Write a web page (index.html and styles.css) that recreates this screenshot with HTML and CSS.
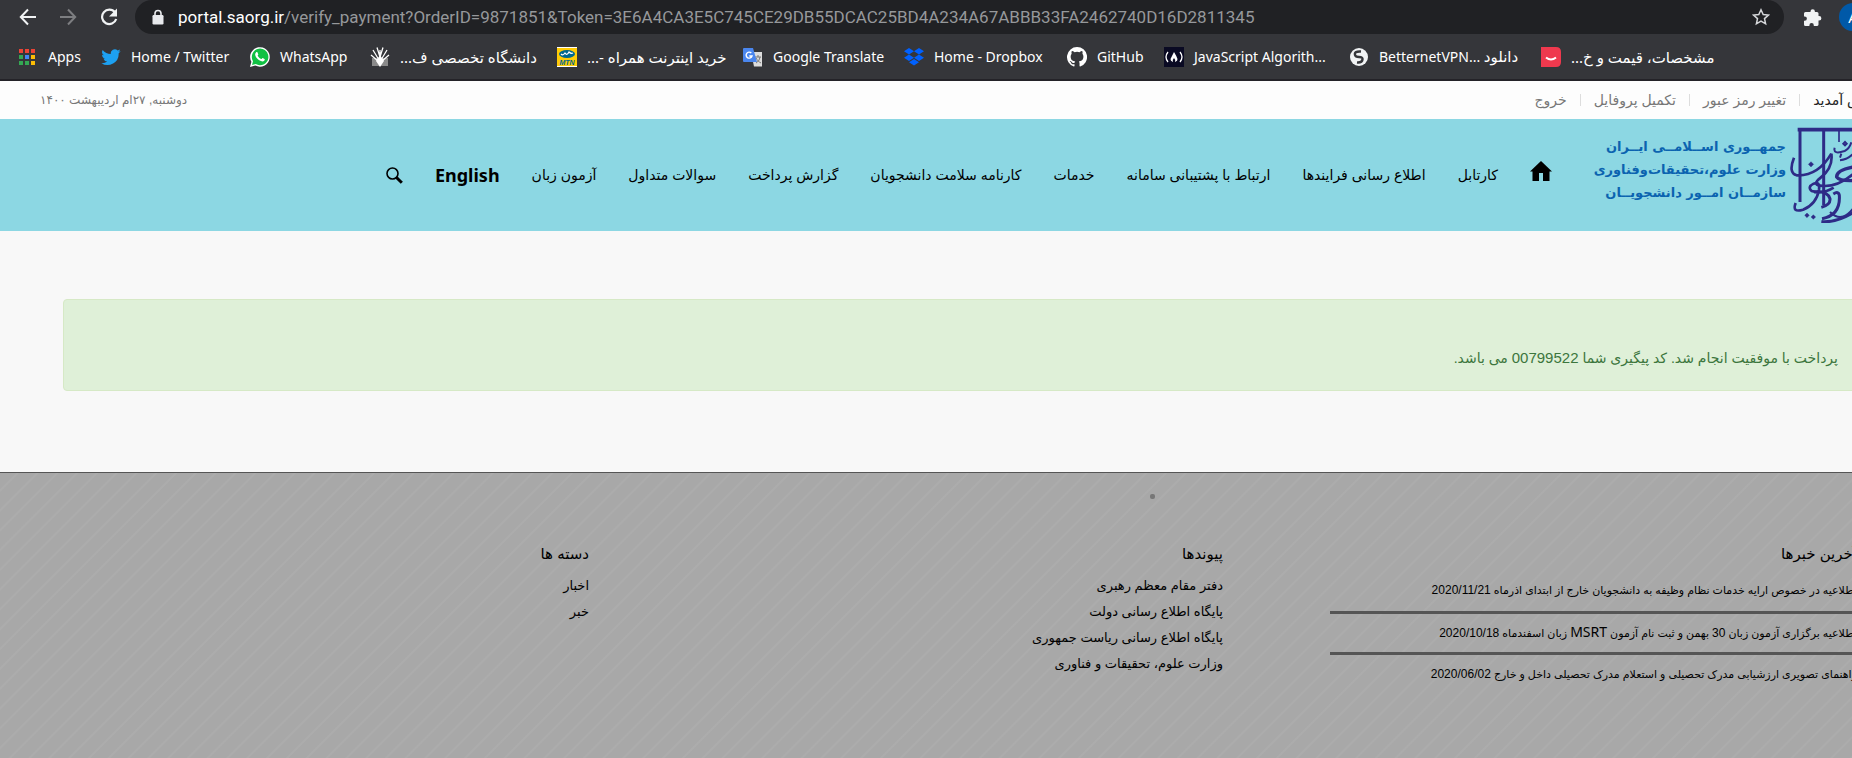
FILE: index.html
```html
<!DOCTYPE html>
<html lang="fa">
<head>
<meta charset="utf-8">
<title>portal.saorg.ir</title>
<link rel="stylesheet" href="styles.css">
</head>
<body>
<div class="browser">
  <div class="toolbar">
    <div class="toolbar-buttons">
      <button class="tool" aria-label="Back"><svg width="18" height="18" viewBox="0 0 18 18"><path d="M17 9H2M9 1.500L1.800 9 9 16.500" fill="none" stroke="#f1f3f4" stroke-width="2"/></svg></button>
      <button class="tool" aria-label="Forward"><svg width="18" height="18" viewBox="0 0 18 18"><path d="M1 9h15M9 1.500L16.200 9 9 16.500" fill="none" stroke="#7d7e81" stroke-width="2"/></svg></button>
      <button class="tool" aria-label="Reload"><svg width="20" height="18" viewBox="0 0 20 18"><path d="M16 4.500A7.200 7.200 0 1 0 17.200 11" fill="none" stroke="#f1f3f4" stroke-width="2.200"/><path d="M18 .5v8h-8z" fill="#f1f3f4"/></svg></button>
    </div>
    <div class="address">
      <svg class="lock" width="12" height="16" viewBox="0 0 12 16"><path d="M3 7V4.500a3 3 0 0 1 6 0V7" fill="none" stroke="#e8eaed" stroke-width="1.600"/><rect x=".5" y="6" width="11" height="9.500" rx="1.200" fill="#e8eaed"/></svg>
      <span class="url"><span class="host">portal.saorg.ir</span>/verify_payment?OrderID=9871851&amp;Token=3E6A4CA3E5C745CE29DB55DCAC25BD4A234A67ABBB33FA2462740D16D2811345</span>
      <button class="tool" aria-label="Bookmark this page"><svg width="18" height="18" viewBox="0 0 18 18"><path d="M9 1.800l2.200 4.800 5.200.5-3.900 3.500 1.100 5.200L9 13.100l-4.600 2.700 1.100-5.200L1.600 7.100l5.200-.5z" fill="none" stroke="#d5d7da" stroke-width="1.500"/></svg></button>
    </div>
    <button class="tool" aria-label="Extensions"><svg width="19" height="19" viewBox="0 0 19 19"><path d="M7.500 3.500a2.200 2.200 0 0 1 4.400 0V4H14a1.500 1.500 0 0 1 1.500 1.500V8h.6a2.300 2.300 0 0 1 0 4.600h-.6v4A1.400 1.400 0 0 1 14 18h-3.200v-.7a2.200 2.200 0 0 0-4.400 0v.7H2.500A1.500 1.500 0 0 1 1 16.500v-3.700h.7a2.200 2.200 0 0 0 0-4.400H1V5.500A1.500 1.500 0 0 1 2.500 4h5z" fill="#f1f3f4"/></svg></button>
    <button class="avatar" aria-label="Profile">A</button>
  </div>
  <nav class="bookmarks" aria-label="Bookmarks">
    <a href="#"><svg width="20" height="20" viewBox="0 0 20 20"><path d="M1 2h4v4H1zM7 2h4v4H7zM13 2h4v4h-4z" fill="#ea4335"/><path d="M1 8h4v4H1zM1 14h4v4H1zM7 14h4v4H7z" fill="#34a853"/><path d="M7 8h4v4H7z" fill="#4285f4"/><path d="M13 8h4v4h-4zM13 14h4v4h-4z" fill="#fbbc05"/></svg><span>Apps</span></a>
    <a href="#"><svg width="20" height="20" viewBox="0 0 24 24"><path d="M23.600 4.900a9 9 0 0 1-2.700.7 4.700 4.700 0 0 0 2.100-2.600 9.500 9.500 0 0 1-3 1.200 4.800 4.800 0 0 0-8.200 4.300A13.500 13.500 0 0 1 2 3.600a4.800 4.800 0 0 0 1.500 6.300 4.700 4.700 0 0 1-2.200-.6 4.800 4.800 0 0 0 3.800 4.700 4.800 4.800 0 0 1-2.100.1 4.800 4.800 0 0 0 4.400 3.300A9.600 9.600 0 0 1 .4 19.400 13.500 13.500 0 0 0 21.200 7.400a9.700 9.700 0 0 0 2.400-2.500z" fill="#1da1f2"/></svg><span>Home / Twitter</span></a>
    <a href="#"><svg width="20" height="20" viewBox="0 0 20 20"><path d="M0 20l1.400-5.200A9.800 9.800 0 1 1 5.300 18.600z" fill="#fff"/><path d="M2 18l1-3.800A8.300 8.300 0 1 1 5.800 17z" fill="#10c143"/><path d="M6 5.500c.5-.6 1.300-.5 1.500 0l.8 1.700c.2.500-.8 1.200-.6 1.600.8 1.500 2 2.600 3.500 3.200.5.200 1-1.200 1.500-1l1.800 1c.5.300.2 1.300-.3 1.800-1.100 1-2.900.8-5-.5C7 11.900 5.400 9.700 5.200 8c-.1-1 .3-2 .8-2.500z" fill="#fff"/></svg><span>WhatsApp</span></a>
    <a href="#"><svg width="20" height="20" viewBox="0 0 20 20"><path d="M2 11h16v8H2z" fill="#8a8a8a"/><g fill="none" stroke="#fff" stroke-width="1.300"><path d="M10 12V3M10 10L7 .5M10 10l3-9.500M9 13L3 3M11 13l6-10M8 14L1 8M12 14l7-6"/></g><path d="M10 8l4 6-4 6-4-6z" fill="#fff"/></svg><span class="fa" dir="rtl">دانشگاه تخصصی ف...</span></a>
    <a href="#"><svg width="20" height="20" viewBox="0 0 20 20"><path d="M0 0h20v20H0z" fill="#fff"/><path d="M0 1h20v18H0z" fill="#ffcb05"/><ellipse cx="10" cy="7" rx="8" ry="4" fill="#00678f"/><path d="M4 7q2 2 4-1 2 3 4-1 2 2 4 1" stroke="#fff" stroke-width="1.200" fill="none"/><text x="10" y="18" text-anchor="middle" class="mtn">MTN</text></svg><span class="fa" dir="rtl">خرید اینترنت همراه -...</span></a>
    <a href="#"><svg width="20" height="20" viewBox="0 0 20 20"><path d="M8 5h11v14.500h-8z" fill="#dcdcdc"/><path d="M12 10h6M15 8v2M17 10c-.5 3-2 5-4 6M13 11c1 2 3 4 5 5" stroke="#777" fill="none"/><path d="M1 1h9l4 14H1a1 1 0 0 1-1-1V2a1 1 0 0 1 1-1z" fill="#4a86ee"/><path d="M8.300 6A3 3 0 1 0 9 9H6.300" stroke="#fff" stroke-width="1.400" fill="none"/></svg><span>Google Translate</span></a>
    <a href="#"><svg width="20" height="20" viewBox="0 0 20 20"><path d="M5 1l5 3.200L5 7.400 0 4.200zM15 1l5 3.200-5 3.200-5-3.200zM5 7.600l5 3.200L5 14 0 10.800zM15 7.600l5 3.200-5 3.200-5-3.200zM10 12l5 3.200-5 3.200-5-3.200z" fill="#0061ff"/></svg><span>Home - Dropbox</span></a>
    <a href="#"><svg width="20" height="20" viewBox="0 0 16 16"><path d="M8 0a8 8 0 0 0-2.530 15.590c.4.070.55-.17.550-.38v-1.490c-2.010.37-2.530-.49-2.690-.94-.09-.23-.48-.94-.82-1.130-.28-.15-.68-.52-.01-.53.63-.01 1.080.58 1.230.82.72 1.210 1.870.87 2.330.66.070-.52.280-.87.510-1.070-1.780-.2-3.640-.89-3.640-3.950 0-.87.310-1.590.820-2.150-.08-.2-.36-1.020.080-2.120 0 0 .67-.21 2.200.82a7.600 7.600 0 0 1 4 0c1.530-1.040 2.200-.82 2.200-.82.440 1.100.160 1.920.080 2.120.51.560.82 1.270.82 2.150 0 3.070-1.870 3.750-3.650 3.950.290.250.540.730.540 1.480v2.200c0 .21.150.46.550.38A8 8 0 0 0 8 0z" fill="#fff"/></svg><span>GitHub</span></a>
    <a href="#"><svg width="20" height="20" viewBox="0 0 20 20"><path d="M0 0h20v20H0z" fill="#0a0a23"/><path d="M4 5q-4 5 0 10M16 5q4 5 0 10" fill="none" stroke="#fff" stroke-width="1.300"/><path d="M10 5q2.500 4 3.500 7 .3 2-2.500 3 1-2-1-4-2 2-1 4-2.800-1-2.500-3Q8 9 10 5z" fill="#fff"/></svg><span>JavaScript Algorith...</span></a>
    <a href="#"><svg width="20" height="20" viewBox="0 0 20 20"><circle cx="10" cy="10" r="9" fill="#f1f3f4"/><path d="M12 4.500Q5 4 6 8q.5 2 4 2 4 0 3.500 2.500Q13 16 8 15.500" fill="none" stroke="#35363a" stroke-width="2.400"/></svg><span>BetternetVPN... <bdi class="fa">دانلود</bdi></span></a>
    <a href="#"><svg width="20" height="20" viewBox="0 0 20 20"><path d="M0 0h15q5 0 5 5v10q0 5-5 5H0z" fill="#ef394e"/><path d="M5 10.500q5 4 10 0" stroke="#fff" stroke-width="2" fill="none"/></svg><span class="fa" dir="rtl">مشخصات، قیمت و خ...</span></a>
  </nav>
</div>

<div class="site" dir="rtl">
  <div class="topbar">
    <ul class="account">
      <li class="welcome">خوش آمدید</li>
      <li><a href="#">تغییر رمز عبور</a></li>
      <li><a href="#">تکمیل پروفایل</a></li>
      <li><a href="#">خروج</a></li>
    </ul>
    <time class="date">دوشنبه, ۲۷ام اردیبهشت ۱۴۰۰</time>
  </div>
  <header class="header">
    <a class="brand" href="#">
      <svg class="emblem" width="100" height="96" viewBox="0 0 300 288" fill="none" stroke="#2e2b87">
        <path d="M23 8H290" stroke-width="11"/>
        <path d="M30 4V225" stroke-width="9"/>
        <path d="M101 4V235" stroke-width="9"/>
        <path d="M147 4V45" stroke-width="5"/>
        <path d="M12 92Q-6 138 20 145 84 148 124 80" stroke-width="8"/>
        <path d="M55 112l8-8 8 8-8 8z" fill="#2e2b87"/>
        <path d="M124 80q6 42-32 72-26 20-2 24 54 8 110-44" stroke-width="8"/>
        <path d="M200 118q-62 10-60 32 10 14 60 10" stroke-width="10"/>
        <path d="M17 228q-12 30 22 20 40-16 48-60 4-26-16-18-20 10-6 22 34 10 66-10" stroke-width="8"/>
        <path d="M72 195q40-4 48 20 2 18-26 26M96 275q56-10 52-70-2-14-18-4M94 284q50 4 106-34" stroke-width="9"/>
        <path d="M134 62q-6 22 30 10 14-6 20-26M150 100q30-4 50-32M160 50l5-5 5 5-5 5zM150 92l4-12M120 255q40 40 80-26" stroke-width="6"/>
        <path d="M44 265l7-7 7 7-7 7zM63 270l7-7 7 7-7 7z" fill="#2e2b87"/>
      </svg>
      <span class="brand-text">
        <span>جمهــوری اســلامــی ایــران</span>
        <span>وزارت علوم،تحقیقات‌وفناوری</span>
        <span>سازمــان امــور دانشجویــان</span>
      </span>
    </a>
    <nav class="menu">
      <a class="home" href="#" aria-label="خانه"><svg width="22" height="20" viewBox="0 0 22 20"><path d="M11 0l11 10.500h-2.500V20H13v-8H9v8H2.500v-9.500H0z" fill="#000"/></svg></a>
      <a href="#">کارتابل</a>
      <a href="#">اطلاع رسانی فرایندها</a>
      <a href="#">ارتباط با پشتیبانی سامانه</a>
      <a href="#">خدمات</a>
      <a href="#">کارنامه سلامت دانشجویان</a>
      <a href="#">گزارش پرداخت</a>
      <a href="#">سوالات متداول</a>
      <a href="#">آزمون زبان</a>
      <a class="english" href="#">English</a>
      <button class="search" aria-label="جستجو"><svg width="17" height="17" viewBox="0 0 17 17"><circle cx="6.500" cy="6.500" r="5.500" fill="none" stroke="#000" stroke-width="1.600"/><path d="M10.500 10.500l5.300 5.300" stroke="#000" stroke-width="3"/></svg></button>
    </nav>
  </header>
  <main class="content">
    <p class="alert">پرداخت با موفقیت انجام شد. کد پیگیری شما <span class="code">00799522</span> می باشد.</p>
  </main>
  <footer class="footer">
    <span class="dot"></span>
    <section class="news">
      <h2>آخرین خبرها</h2>
      <ul>
        <li><a href="#">اطلاعیه در خصوص ارایه خدمات نظام وظیفه به دانشجویان خارج از ابتدای اذرماه <bdi>2020/11/21</bdi></a></li>
        <li><a href="#">اطلاعیه برگزاری آزمون زبان <bdi>30</bdi> بهمن و ثبت نام آزمون <span class="latin">MSRT</span> زبان اسفندماه <bdi>2020/10/18</bdi></a></li>
        <li><a href="#">راهنمای تصویری ارزشیابی مدرک تحصیلی و استعلام مدرک تحصیلی داخل و خارج <bdi>2020/06/02</bdi></a></li>
      </ul>
    </section>
    <section class="links">
      <h2>پیوندها</h2>
      <ul>
        <li><a href="#">دفتر مقام معظم رهبری</a></li>
        <li><a href="#">پایگاه اطلاع رسانی دولت</a></li>
        <li><a href="#">پایگاه اطلاع رسانی ریاست جمهوری</a></li>
        <li><a href="#">وزارت علوم، تحقیقات و فناوری</a></li>
      </ul>
    </section>
    <section class="links">
      <h2>دسته ها</h2>
      <ul>
        <li><a href="#">اخبار</a></li>
        <li><a href="#">خبر</a></li>
      </ul>
    </section>
  </footer>
</div>
</body>
</html>
```
FILE: styles.css
```css
* { box-sizing: border-box; }

body {
  margin: 0;
  min-height: 100vh;
  display: flex;
  flex-direction: column;
  overflow: hidden;
  background: #f8f8f8;
  font: 13px/20px "Liberation Sans", "DejaVu Sans", sans-serif;
}

ul, h2, p { margin: 0; padding: 0; }
ul { list-style: none; }
a { color: inherit; text-decoration: none; }
svg { display: block; flex: none; }
button { padding: 0; border: 0; background: none; font: inherit; color: inherit; }

/* Browser chrome */
.browser {
  background: #35363a;
  border-bottom: 2px solid #242328;
  color: #fff;
  font-family: "Noto Sans", "DejaVu Sans", sans-serif;
}

.toolbar { display: flex; align-items: center; height: 34px; overflow: hidden; }
.toolbar-buttons { display: flex; gap: 22px; width: 135px; padding-left: 19px; }

.address {
  flex: 1;
  display: flex;
  align-items: center;
  height: 34px;
  padding: 0 14px 0 17px;
  border-radius: 17px;
  background: #202124;
}
.url {
  flex: 1;
  margin-left: 14px;
  color: #96989b;
  font-family: Roboto, sans-serif;
  font-size: 17px;
  white-space: nowrap;
}
.host { color: #fff; }
.toolbar > .tool { margin: 0 17px 0 19px; }
.avatar {
  width: 28px;
  height: 28px;
  margin-right: -15px;
  border-radius: 50%;
  background: #0059a8;
  font-size: 15px;
  flex: none;
}

.bookmarks {
  display: grid;
  grid-template-columns: 83px 149px 120px 187px 186px 161px 163px 97px 185px 192px 1fr;
  align-items: center;
  height: 45px;
  padding-left: 18px;
  font-size: 14px;
  white-space: nowrap;
}
.bookmarks a { display: flex; align-items: center; gap: 10px; }
.bookmarks .fa { font-size: 15px; }
.mtn { font: italic bold 7px "Liberation Sans", sans-serif; fill: #00678f; }

/* Portal, slightly wider than the window */
.site {
  flex: 1;
  display: flex;
  flex-direction: column;
  width: calc(100% + 68px);
}

.topbar {
  display: flex;
  justify-content: space-between;
  align-items: center;
  height: 38px;
  padding: 0 40px;
  background: #fdfdfd;
  color: #777;
}
.account { display: flex; align-items: center; font-size: 14px; line-height: 12px; }
.account li + li { margin-right: 13px; padding-right: 13px; border-right: 1px solid #ddd; }
.welcome { color: #222; }
.date { font-size: 12px; }

.header {
  display: flex;
  align-items: center;
  height: 112px;
  padding: 0 30px;
  background: #8cd7e3;
  color: #000;
}
.brand { display: flex; align-items: flex-start; gap: 4px; }
.brand-text {
  display: flex;
  flex-direction: column;
  width: 186px;
  padding-top: 8px;
  color: #0b63b0;
  font: bold 13px/23px "DejaVu Sans", sans-serif;
  white-space: nowrap;
}
.menu {
  display: flex;
  align-items: center;
  gap: 32px;
  margin-right: 48px;
  font-size: 14px;
  white-space: nowrap;
}
.home { padding-bottom: 8px; }
.english { font: bold 18px/20px "Noto Sans", sans-serif; }

.content { padding: 68px 63px 81px; }
.alert {
  padding: 48px 18px 22px;
  border: 1px solid #d6e9c6;
  border-radius: 4px;
  background: #dff0d8;
  color: #3c763d;
  font-size: 14px;
}
.code { font-size: 15px; }

.footer {
  flex: 1;
  position: relative;
  display: grid;
  grid-template-columns: 527px 634px 1fr;
  padding: 71px 63px 40px;
  border-top: 1px solid #555;
  background: #a8a8a8 repeating-linear-gradient(135deg, transparent 0 11px, #acacac 12px 13px, transparent 14px);
  color: #000;
}
.footer h2 { font-size: 15px; line-height: 20px; font-weight: 400; }
.news ul { padding-top: 6px; font-size: 11px; white-space: nowrap; }
.news li { height: 41px; line-height: 40px; }
.news li + li { border-top: 3px solid #555; line-height: 38px; }
.news bdi { font-size: 12px; }
.latin { font: 14px "Noto Sans", sans-serif; }
.links { padding-right: 107px; }
.links ul { padding-top: 9px; line-height: 26px; }
.dot {
  position: absolute;
  top: 21px;
  left: 1150px;
  width: 5px;
  height: 5px;
  border-radius: 2px;
  background: #777;
}
```
